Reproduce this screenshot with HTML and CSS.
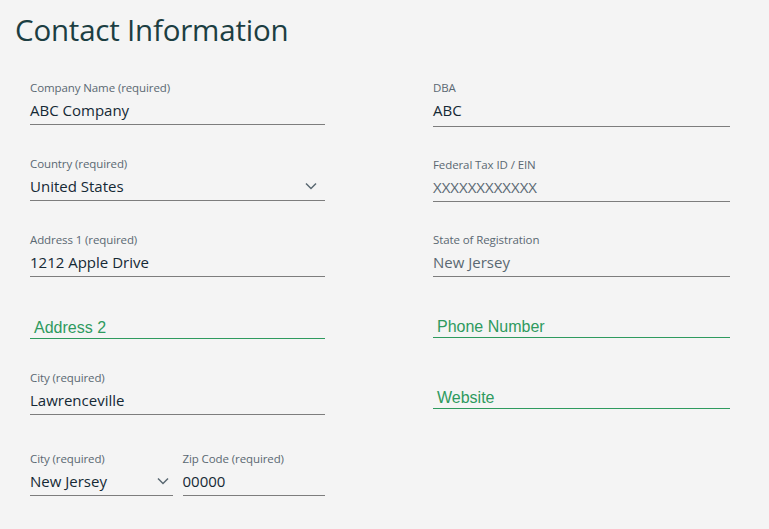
FILE: index.html
```html
<!DOCTYPE html>
<html lang="en">
<head>
<meta charset="utf-8">
<title>Contact Information</title>
<link rel="stylesheet" href="styles.css">
</head>
<body>
<main class="page">
  <h1 class="title">Contact Information</h1>
  <div class="form">
    <div class="col">
      <div class="field">
        <div class="label">Company Name (required)</div>
        <div class="value">ABC Company</div>
      </div>
      <div class="field">
        <div class="label">Country (required)</div>
        <div class="value select">United States<svg class="chev" viewBox="0 0 12 8" width="12" height="8"><path d="M1 1.5 L6 6.5 L11 1.5" fill="none" stroke="#5a6872" stroke-width="1.5"/></svg></div>
      </div>
      <div class="field">
        <div class="label">Address 1 (required)</div>
        <div class="value">1212 Apple Drive</div>
      </div>
      <div class="field empty">
        <div class="placeholder">Address 2</div>
      </div>
      <div class="field">
        <div class="label">City (required)</div>
        <div class="value">Lawrenceville</div>
      </div>
      <div class="pair">
        <div class="field">
          <div class="label">City (required)</div>
          <div class="value select">New Jersey<svg class="chev" viewBox="0 0 12 8" width="12" height="8"><path d="M1 1.5 L6 6.5 L11 1.5" fill="none" stroke="#5a6872" stroke-width="1.5"/></svg></div>
        </div>
        <div class="field">
          <div class="label">Zip Code (required)</div>
          <div class="value">00000</div>
        </div>
      </div>
    </div>
    <div class="col right">
      <div class="field tall">
        <div class="label">DBA</div>
        <div class="value">ABC</div>
      </div>
      <div class="field">
        <div class="label">Federal Tax ID / EIN</div>
        <div class="value muted">XXXXXXXXXXXX</div>
      </div>
      <div class="field">
        <div class="label">State of Registration</div>
        <div class="value muted">New Jersey</div>
      </div>
      <div class="field empty">
        <div class="placeholder">Phone Number</div>
      </div>
      <div class="field empty website">
        <div class="placeholder">Website</div>
      </div>
    </div>
  </div>
</main>
</body>
</html>
```

FILE: styles.css
```css
html, body {
  margin: 0;
  padding: 0;
  background: #f4f4f4;
}
.page {
  width: 769px;
  height: 529px;
  box-sizing: border-box;
  padding: 11px 0 0 15px;
  font-family: "Open Sans", "Noto Sans", sans-serif;
}
.title {
  margin: 0;
  font-family: "Open Sans", sans-serif;
  font-weight: 400;
  font-size: 29.5px;
  line-height: 38px;
  color: #1c3e42;
  letter-spacing: -0.2px;
}
.form {
  display: flex;
  gap: 108px;
  padding-left: 15px;
  margin-top: 32px;
}
.col {
  width: 295px;
  display: flex;
  flex-direction: column;
  gap: 32px;
}
.col.right {
  width: 297px;
  gap: 31px;
}
.field {
  border-bottom: 1px solid #7d7d7d;
  padding-bottom: 5px;
}
.field.tall {
  padding-bottom: 7px;
}
.label {
  font-size: 11.5px;
  line-height: 14px;
  color: #5a6872;
  margin-bottom: 6px;
  letter-spacing: -0.1px;
}
.value {
  font-size: 15px;
  line-height: 18px;
  color: #152935;
  letter-spacing: 0;
}
.value.muted {
  color: #5a6872;
}
.select {
  display: flex;
  align-items: center;
  justify-content: space-between;
  padding-right: 8px;
}
.chev {
  display: block;
}
.field.empty {
  border-bottom-color: #2e9a5e;
  padding: 10px 0 1px 4px;
}
.placeholder {
  font-family: "Liberation Sans", Arial, sans-serif;
  font-size: 16px;
  line-height: 18px;
  color: #2e9a5e;
}
.field.website {
  margin-top: 10px;
}
.pair {
  display: flex;
  gap: 10px;
  margin-top: 5px;
}
.pair .field {
  flex: 1;
}
.pair .select {
  padding-right: 4px;
}
```
